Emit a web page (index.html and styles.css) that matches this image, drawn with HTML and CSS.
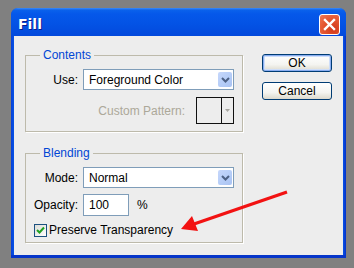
FILE: index.html
```html
<!DOCTYPE html>
<html>
<head>
<meta charset="utf-8">
<link rel="stylesheet" href="styles.css">
</head>
<body>
<div class="window">
  <div class="titlebar">
    <span class="title">Fill</span>
    <button class="close" aria-label="Close">
      <svg width="13" height="13" viewBox="0 0 13 13"><path d="M2 2 L11 11 M11 2 L2 11" stroke="#fff" stroke-width="2.4" stroke-linecap="square"/></svg>
    </button>
  </div>
  <div class="client">
    <div class="main">
      <fieldset class="group contents">
        <legend>Contents</legend>
        <div class="row">
          <label class="lbl">Use:</label>
          <div class="select"><span class="val">Foreground Color</span><span class="drop"><svg width="9" height="6" viewBox="0 0 9 6"><path d="M1 1 L4.5 4.5 L8 1" fill="none" stroke="#4d6185" stroke-width="2"/></svg></span></div>
        </div>
        <div class="row pattern-row">
          <span class="disabled">Custom Pattern:</span>
          <div class="pattern"><span class="swatch"></span><span class="pdrop"><svg width="5" height="3" viewBox="0 0 5 3"><path d="M0 0 H5 L2.5 3 Z" fill="#a7a6a0"/></svg></span></div>
        </div>
      </fieldset>
      <fieldset class="group blending">
        <legend>Blending</legend>
        <div class="row">
          <label class="lbl">Mode:</label>
          <div class="select"><span class="val">Normal</span><span class="drop"><svg width="9" height="6" viewBox="0 0 9 6"><path d="M1 1 L4.5 4.5 L8 1" fill="none" stroke="#4d6185" stroke-width="2"/></svg></span></div>
        </div>
        <div class="row">
          <label class="lbl">Opacity:</label>
          <div class="input">100</div>
          <span class="pct">%</span>
        </div>
        <div class="row check-row">
          <span class="checkbox"><svg width="9" height="9" viewBox="0 0 9 9"><path d="M1 4 L3.5 6.5 L8 1.5" fill="none" stroke="#21a121" stroke-width="2"/></svg></span>
          <span class="check-label">Preserve Transparency</span>
        </div>
      </fieldset>
    </div>
    <div class="buttons">
      <button class="btn default">OK</button>
      <button class="btn">Cancel</button>
    </div>
  </div>
</div>
<svg class="arrow" width="354" height="268" viewBox="0 0 354 268">
  <line x1="287" y1="192" x2="194" y2="224" stroke="#f21212" stroke-width="3.2"/>
  <polygon points="181,229 192,216 198,231" fill="#f21212"/>
</svg>
</body>
</html>
```
FILE: styles.css
```css
* { box-sizing: border-box; }
html, body { margin: 0; padding: 0; }
body {
  width: 354px;
  height: 268px;
  background: #808080;
  position: relative;
  overflow: hidden;
  font-family: "Liberation Sans", Arial, sans-serif;
  font-size: 12px;
  color: #000;
}
.window {
  margin: 8px 0 0 11px;
  width: 335px;
  height: 250px;
  border-radius: 7px 7px 0 0;
  background: linear-gradient(90deg, #0840d8, #0653e6 3px, #0653e6 calc(100% - 3px), #0530c8);
  display: flex;
  flex-direction: column;
  box-shadow: inset 0 -3px 0 #0635c9;
}
.titlebar {
  height: 28px;
  padding: 4px 6px 0 7px;
  display: flex;
  align-items: center;
  justify-content: space-between;
  border-radius: 7px 7px 0 0;
  background: linear-gradient(#3d8cf6 0, #0a62ec 2px, #0558ea 6px, #0352e4 60%, #0349dc 100%);
}
.title {
  font-family: "DejaVu Sans", sans-serif;
  font-weight: bold;
  font-size: 14px;
  color: #fff;
  text-shadow: 1px 1px 0 #0b1c8c;
}
.close {
  width: 21px;
  height: 21px;
  padding: 0;
  border: 1px solid #fff;
  border-radius: 3px;
  background: radial-gradient(circle at 70% 75%, #d2381a, #e65a34 60%, #f07a58);
  display: flex;
  align-items: center;
  justify-content: center;
}
.close svg { display: block; }
.client {
  flex: 1;
  margin: 0 3px 3px 3px;
  background: #ededed;
  display: flex;
  padding: 12px 0 0 11px;
  gap: 20px;
}
.main {
  width: 217px;
  display: flex;
  flex-direction: column;
}
.group {
  margin: 0;
  width: 217px;
  border: 1px solid #bdbaab;
  box-shadow: 1px 1px 0 #fff;
  padding: 7px 8px 7px 0;
  display: flex;
  flex-direction: column;
}
.group legend {
  margin-left: 14px;
  padding: 0 3px;
  line-height: 14px;
  color: #0046d5;
}
.contents { gap: 7px; }
.blending {
  margin-top: 14px;
  padding-bottom: 5px;
  gap: 0;
}
.blending .row + .row { margin-top: 6px; }
.blending .check-row { margin-top: 7px !important; }
.row {
  display: flex;
  align-items: center;
}
.lbl {
  width: 52px;
  margin-right: 5px;
  text-align: right;
}
.select {
  width: 151px;
  height: 21px;
  border: 1px solid #7f9db9;
  background: #fff;
  display: flex;
  align-items: center;
  padding: 2px 1px 2px 5px;
}
.select .val { flex: 1; }
.drop {
  width: 14px;
  height: 100%;
  border-radius: 2px;
  background: linear-gradient(135deg, #c6d7fb, #b4ccf7 60%, #a9c2f2);
  display: flex;
  align-items: center;
  justify-content: center;
}
.drop svg { display: block; }
.pattern-row {
  justify-content: flex-end;
  gap: 11px;
}
.disabled { color: #aca899; }
.pattern {
  width: 38px;
  height: 27px;
  border: 1px solid #111;
  display: flex;
}
.swatch {
  flex: 1;
  border-right: 1px solid #111;
}
.pdrop {
  width: 11px;
  display: flex;
  align-items: center;
  justify-content: center;
}
.pdrop svg { display: block; }
.input {
  width: 46px;
  height: 22px;
  border: 1px solid #7f9db9;
  background: #fff;
  padding: 0 0 0 5px;
  display: flex;
  align-items: center;
}
.pct { margin-left: 8px; }
.check-row { padding-left: 8px; }
.checkbox {
  width: 13px;
  height: 13px;
  border: 1px solid #1c5180;
  background: linear-gradient(135deg, #dcdcd7, #fff);
  display: flex;
  align-items: center;
  justify-content: center;
  margin-right: 2px;
}
.checkbox svg { display: block; }
.buttons {
  margin-top: 6px;
  display: flex;
  flex-direction: column;
  gap: 10px;
}
.btn {
  width: 70px;
  height: 18px;
  padding: 0;
  border: 1px solid #003c74;
  border-radius: 3px;
  background: linear-gradient(#ffffff, #f4f4f0 60%, #dcd9cd);
  font-family: "Liberation Sans", Arial, sans-serif;
  font-size: 12px;
  color: #000;
}
.btn.default {
  box-shadow: inset 0 0 0 1px #89adf0, inset 0 0 0 2px #cedef9;
}
.arrow {
  position: absolute;
  left: 0;
  top: 0;
  pointer-events: none;
}
```
